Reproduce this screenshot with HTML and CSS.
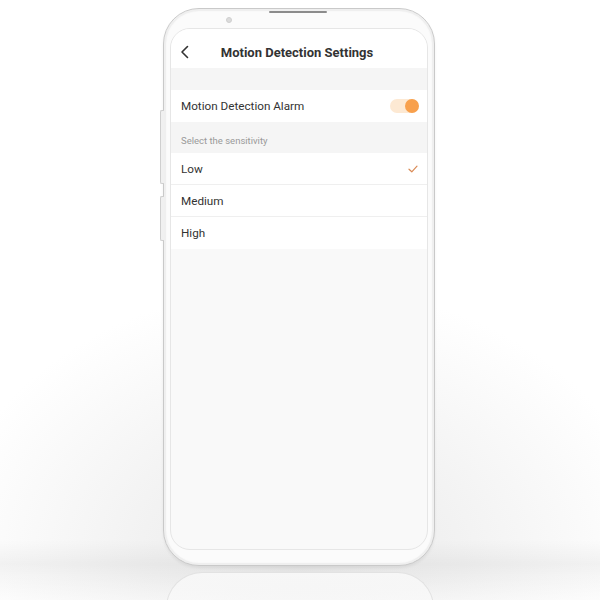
FILE: index.html
```html
<!DOCTYPE html>
<html>
<head>
<meta charset="utf-8">
<link rel="stylesheet" href="styles.css">
</head>
<body>
<div class="stage">
  <div class="floor"></div>
  <div class="reflection"></div>
  <div class="phone">
    <div class="btn btn-a"></div>
    <div class="btn btn-b"></div>
    <div class="bezel-top">
      <span class="camera"></span>
      <span class="speaker"></span>
    </div>
    <div class="screen">
      <div class="header">
        <svg class="back" width="10" height="14" viewBox="0 0 10 14"><path d="M7.5 1.5 L2 7 L7.5 12.5" fill="none" stroke="#333" stroke-width="1.6" stroke-linecap="round" stroke-linejoin="round"/></svg>
        <div class="title">Motion Detection Settings</div>
      </div>
      <div class="gap"></div>
      <div class="row">
        <span>Motion Detection Alarm</span>
        <span class="toggle"><span class="knob"></span></span>
      </div>
      <div class="section">Select the sensitivity</div>
      <div class="row sep">
        <span>Low</span>
        <svg class="check" width="10" height="8" viewBox="0 0 10 8"><path d="M1 4.2 L3.8 6.8 L9 1.2" fill="none" stroke="#d98a55" stroke-width="1.2" stroke-linecap="round" stroke-linejoin="round"/></svg>
      </div>
      <div class="row sep"><span>Medium</span></div>
      <div class="row"><span>High</span></div>
    </div>
  </div>
</div>
</body>
</html>
```
FILE: styles.css
```css
html, body {
  margin: 0;
  padding: 0;
}
body {
  width: 600px;
  height: 600px;
  overflow: hidden;
  font-family: Roboto, "Liberation Sans", Arial, sans-serif;
}
.stage {
  position: relative;
  width: 600px;
  height: 600px;
  display: flex;
  justify-content: center;
  align-items: flex-start;
  background:
    radial-gradient(ellipse 360px 280px at 300px 565px, #e9e9e9 0%, #f2f2f2 45%, rgba(255,255,255,0) 100%),
    #ffffff;
  overflow: hidden;
}
.floor {
  position: absolute;
  left: 0;
  top: 540px;
  width: 600px;
  height: 60px;
  background: linear-gradient(to bottom, rgba(0,0,0,0) 0%, rgba(0,0,0,0.04) 40%, rgba(0,0,0,0.02) 60%, rgba(255,255,255,0.3) 100%);
}
.reflection {
  position: absolute;
  left: 166px;
  top: 572px;
  width: 266px;
  height: 60px;
  border: 1px solid #e2e2e2;
  border-bottom: none;
  border-radius: 36px 36px 0 0;
  background: linear-gradient(to bottom, #f7f7f7, rgba(255,255,255,0.4));
}
.phone {
  position: relative;
  margin-top: 8px;
  margin-left: -2px;
  width: 272px;
  height: 558px;
  box-sizing: border-box;
  border: 1px solid #c9c9c9;
  border-radius: 36px;
  background: #fbfbfb;
  box-shadow: inset 0 0 0 2px #efefef, inset 0 0 0 3px #f9f9f9, 0 2px 3px rgba(0,0,0,0.06);
  padding: 0 6px;
  display: flex;
  flex-direction: column;
}
.btn {
  position: absolute;
  left: -4px;
  width: 3px;
  border: 1px solid #cfcfcf;
  border-right: none;
  border-radius: 2px 0 0 2px;
  background: #f0f0f0;
}
.btn-a { top: 101px; height: 72px; }
.btn-b { top: 187px; height: 43px; }
.bezel-top {
  height: 19px;
  position: relative;
}
.camera {
  position: absolute;
  left: 56px;
  top: 8px;
  width: 6px;
  height: 6px;
  border-radius: 50%;
  background: #dcdcdc;
  border: 1px solid #cfcfcf;
  box-sizing: border-box;
}
.speaker {
  position: absolute;
  left: 99px;
  top: 2px;
  width: 58px;
  height: 2px;
  border-radius: 1px;
  background: #8c8c8c;
}
.screen {
  height: 520px;
  border: 1px solid #e6e6e6;
  border-radius: 20px;
  background: #f9f9f9;
  overflow: hidden;
  display: flex;
  flex-direction: column;
}
.header {
  height: 39px;
  background: #ffffff;
  display: flex;
  align-items: center;
  position: relative;
  flex-shrink: 0;
}
.back {
  position: absolute;
  left: 9px;
  top: 16px;
}
.title {
  flex: 1;
  text-align: center;
  padding-right: 4px;
  font-size: 13px;
  font-weight: 700;
  color: #333333;
  padding-top: 7px;
}
.gap {
  height: 22px;
  flex-shrink: 0;
  background: #f5f5f5;
}
.row {
  height: 32px;
  background: #ffffff;
  display: flex;
  align-items: center;
  justify-content: space-between;
  padding: 0 9px 0 10px;
  font-size: 11.7px;
  color: #333333;
  box-sizing: border-box;
  flex-shrink: 0;
}
.sep {
  border-bottom: 1px solid #efefef;
}
.section {
  height: 31px;
  box-sizing: border-box;
  padding: 13px 0 0 10px;
  font-size: 9.5px;
  color: #9a9a9a;
  flex-shrink: 0;
  background: #f5f5f5;
}
.toggle {
  width: 28px;
  height: 14px;
  border-radius: 7px;
  background: #fde9d3;
  position: relative;
}
.knob {
  position: absolute;
  right: -1px;
  top: 0;
  width: 14px;
  height: 14px;
  border-radius: 50%;
  background: #f8a04c;
}
.check {
  margin-right: 0;
}
```
